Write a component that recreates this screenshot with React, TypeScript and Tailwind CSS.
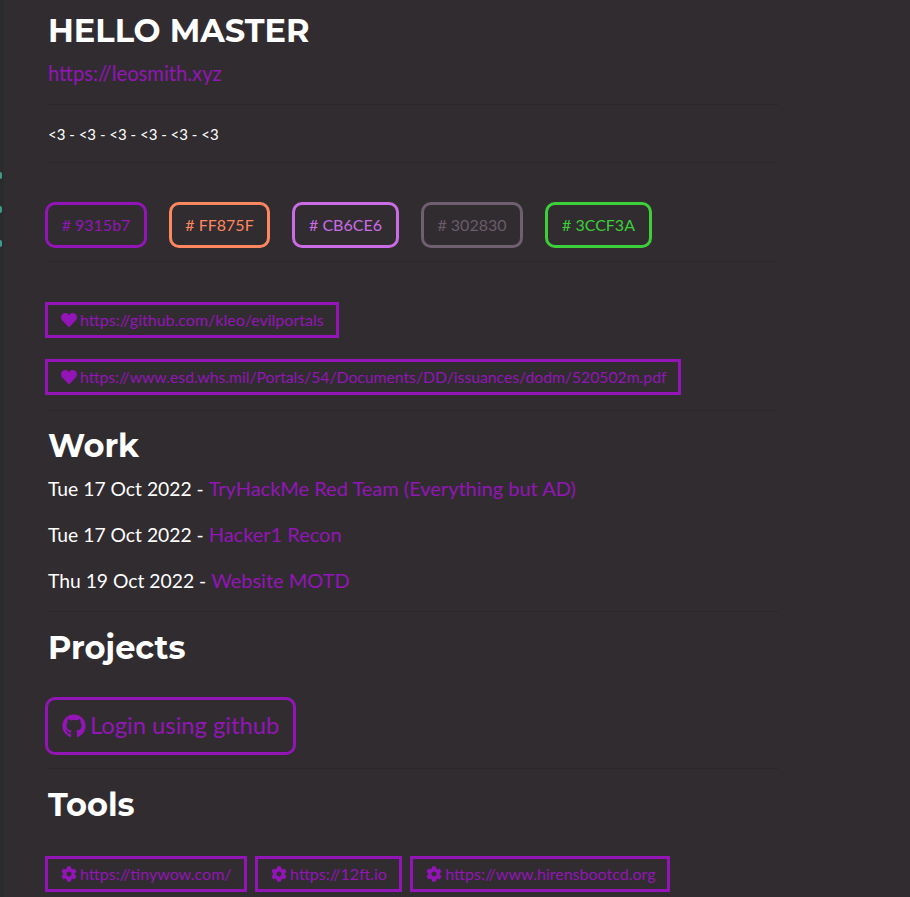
import { FaCog, FaGithub, FaHeart } from "react-icons/fa";

const swatches = [
  { label: "9315b7", cls: "border-[#9315b7] text-[#9315b7]", width: "w-[102px]" },
  { label: "FF875F", cls: "border-[#ff875f] text-[#ff875f]", width: "w-[101px]" },
  { label: "CB6CE6", cls: "border-[#cb6ce6] text-[#cb6ce6]", width: "w-[107px]" },
  { label: "302830", cls: "border-[#6f5f70] text-[#6b5c6b]", width: "w-[102px]" },
  { label: "3CCF3A", cls: "border-[#3ccf3a] text-[#3ccf3a]", width: "w-[107px]" },
];

const heartLinks = [
  { href: "https://github.com/kleo/evilportals", cls: "text-[16px]" },
  { href: "https://www.esd.whs.mil/Portals/54/Documents/DD/issuances/dodm/520502m.pdf", cls: "text-[15.73px]" },
];

const work = [
  { date: "Tue 17 Oct 2022", title: "TryHackMe Red Team (Everything but AD)" },
  { date: "Tue 17 Oct 2022", title: "Hacker1 Recon" },
  { date: "Thu 19 Oct 2022", title: "Website MOTD" },
];

const tools = ["https://tinywow.com/", "https://12ft.io", "https://www.hirensbootcd.org"];

function Divider() {
  return <div className="h-px w-[730px] ml-[3px] bg-[#2a262a]" />;
}

function Heading({ children }: { children: string }) {
  return <h2 className="ml-[3px] text-[32px] leading-[40px] font-bold text-white font-['Montserrat','Inter',sans-serif]">{children}</h2>;
}

export default function App() {
  return (
    <div className="flex h-[897px] overflow-hidden bg-[#302c30] font-['Lato',sans-serif] antialiased">
      {/* editor gutter */}
      <div className="w-[4px] shrink-0 bg-[#2a2c2c] flex flex-col items-start gap-[27px] pt-[172px]">
        <span className="w-[2px] h-[7px] rounded-r-full bg-[#3d9c8c]" />
        <span className="w-[2px] h-[7px] rounded-r-full bg-[#3d9c8c]" />
        <span className="w-[2px] h-[7px] rounded-r-full bg-[#3d9c8c]" />
      </div>

      <main className="pl-[41px] flex flex-col items-start">
        <h1 className="ml-[3px] mt-[11px] text-[32px] leading-[40px] font-bold text-white font-['Montserrat','Inter',sans-serif]">HELLO MASTER</h1>
        <a className="ml-[3px] mt-[7px] text-[20.2px] leading-[30px] text-[#9315b7]">https://leosmith.xyz</a>
        <div className="mt-[16px]"><Divider /></div>
        <p className="ml-[3px] mt-[19px] text-[15px] leading-[20px] text-white">&lt;3 - &lt;3 - &lt;3 - &lt;3 - &lt;3 - &lt;3</p>
        <div className="mt-[18px]"><Divider /></div>

        <div className="mt-[39px] flex gap-[22px]">
          {swatches.map((s) => (
            <div key={s.label} className={`${s.width} h-[46px] border-[3px] rounded-[10px] flex items-center justify-center text-[16px] ${s.cls}`}>
              # {s.label}
            </div>
          ))}
        </div>
        <div className="mt-[13px]"><Divider /></div>

        <div className="mt-[40px] flex flex-col items-start gap-[21px]">
          {heartLinks.map((l) => (
            <a key={l.href} className={`h-[36px] border-[3px] border-[#9315b7] pl-[13px] pr-[12px] flex items-center gap-[3px] text-[#9315b7] ${l.cls}`}>
              <FaHeart className="w-[16px] h-[16px] shrink-0" />
              {l.href}
            </a>
          ))}
        </div>
        <div className="mt-[15px]"><Divider /></div>

        <div className="mt-[15px]"><Heading>Work</Heading></div>
        <div className="ml-[3px] mt-[8px] flex flex-col gap-[16px]">
          {work.map((w) => (
            <p key={w.title} className="text-[19.3px] leading-[30px] text-white">
              {w.date} - <a className="text-[20px] leading-none text-[#9315b7]">{w.title}</a>
            </p>
          ))}
        </div>
        <div className="mt-[15px]"><Divider /></div>

        <div className="mt-[16px]"><Heading>Projects</Heading></div>
        <a className="mt-[29px] h-[58px] border-[3px] border-[#9315b7] rounded-[10px] px-[14px] flex items-center gap-[4px] text-[23.75px] text-[#9315b7]">
          <FaGithub className="w-[24px] h-[24px] shrink-0" />
          Login using github
        </a>
        <div className="mt-[13px]"><Divider /></div>

        <div className="mt-[16px]"><Heading>Tools</Heading></div>
        <div className="mt-[31px] flex gap-[8.5px]">
          {tools.map((href) => (
            <a key={href} className="h-[36px] border-[3px] border-[#9315b7] pl-[13px] pr-[12px] flex items-center gap-[3px] text-[16px] text-[#9315b7]">
              <FaCog className="w-[16px] h-[16px] shrink-0" />
              {href}
            </a>
          ))}
        </div>
      </main>
    </div>
  );
}
